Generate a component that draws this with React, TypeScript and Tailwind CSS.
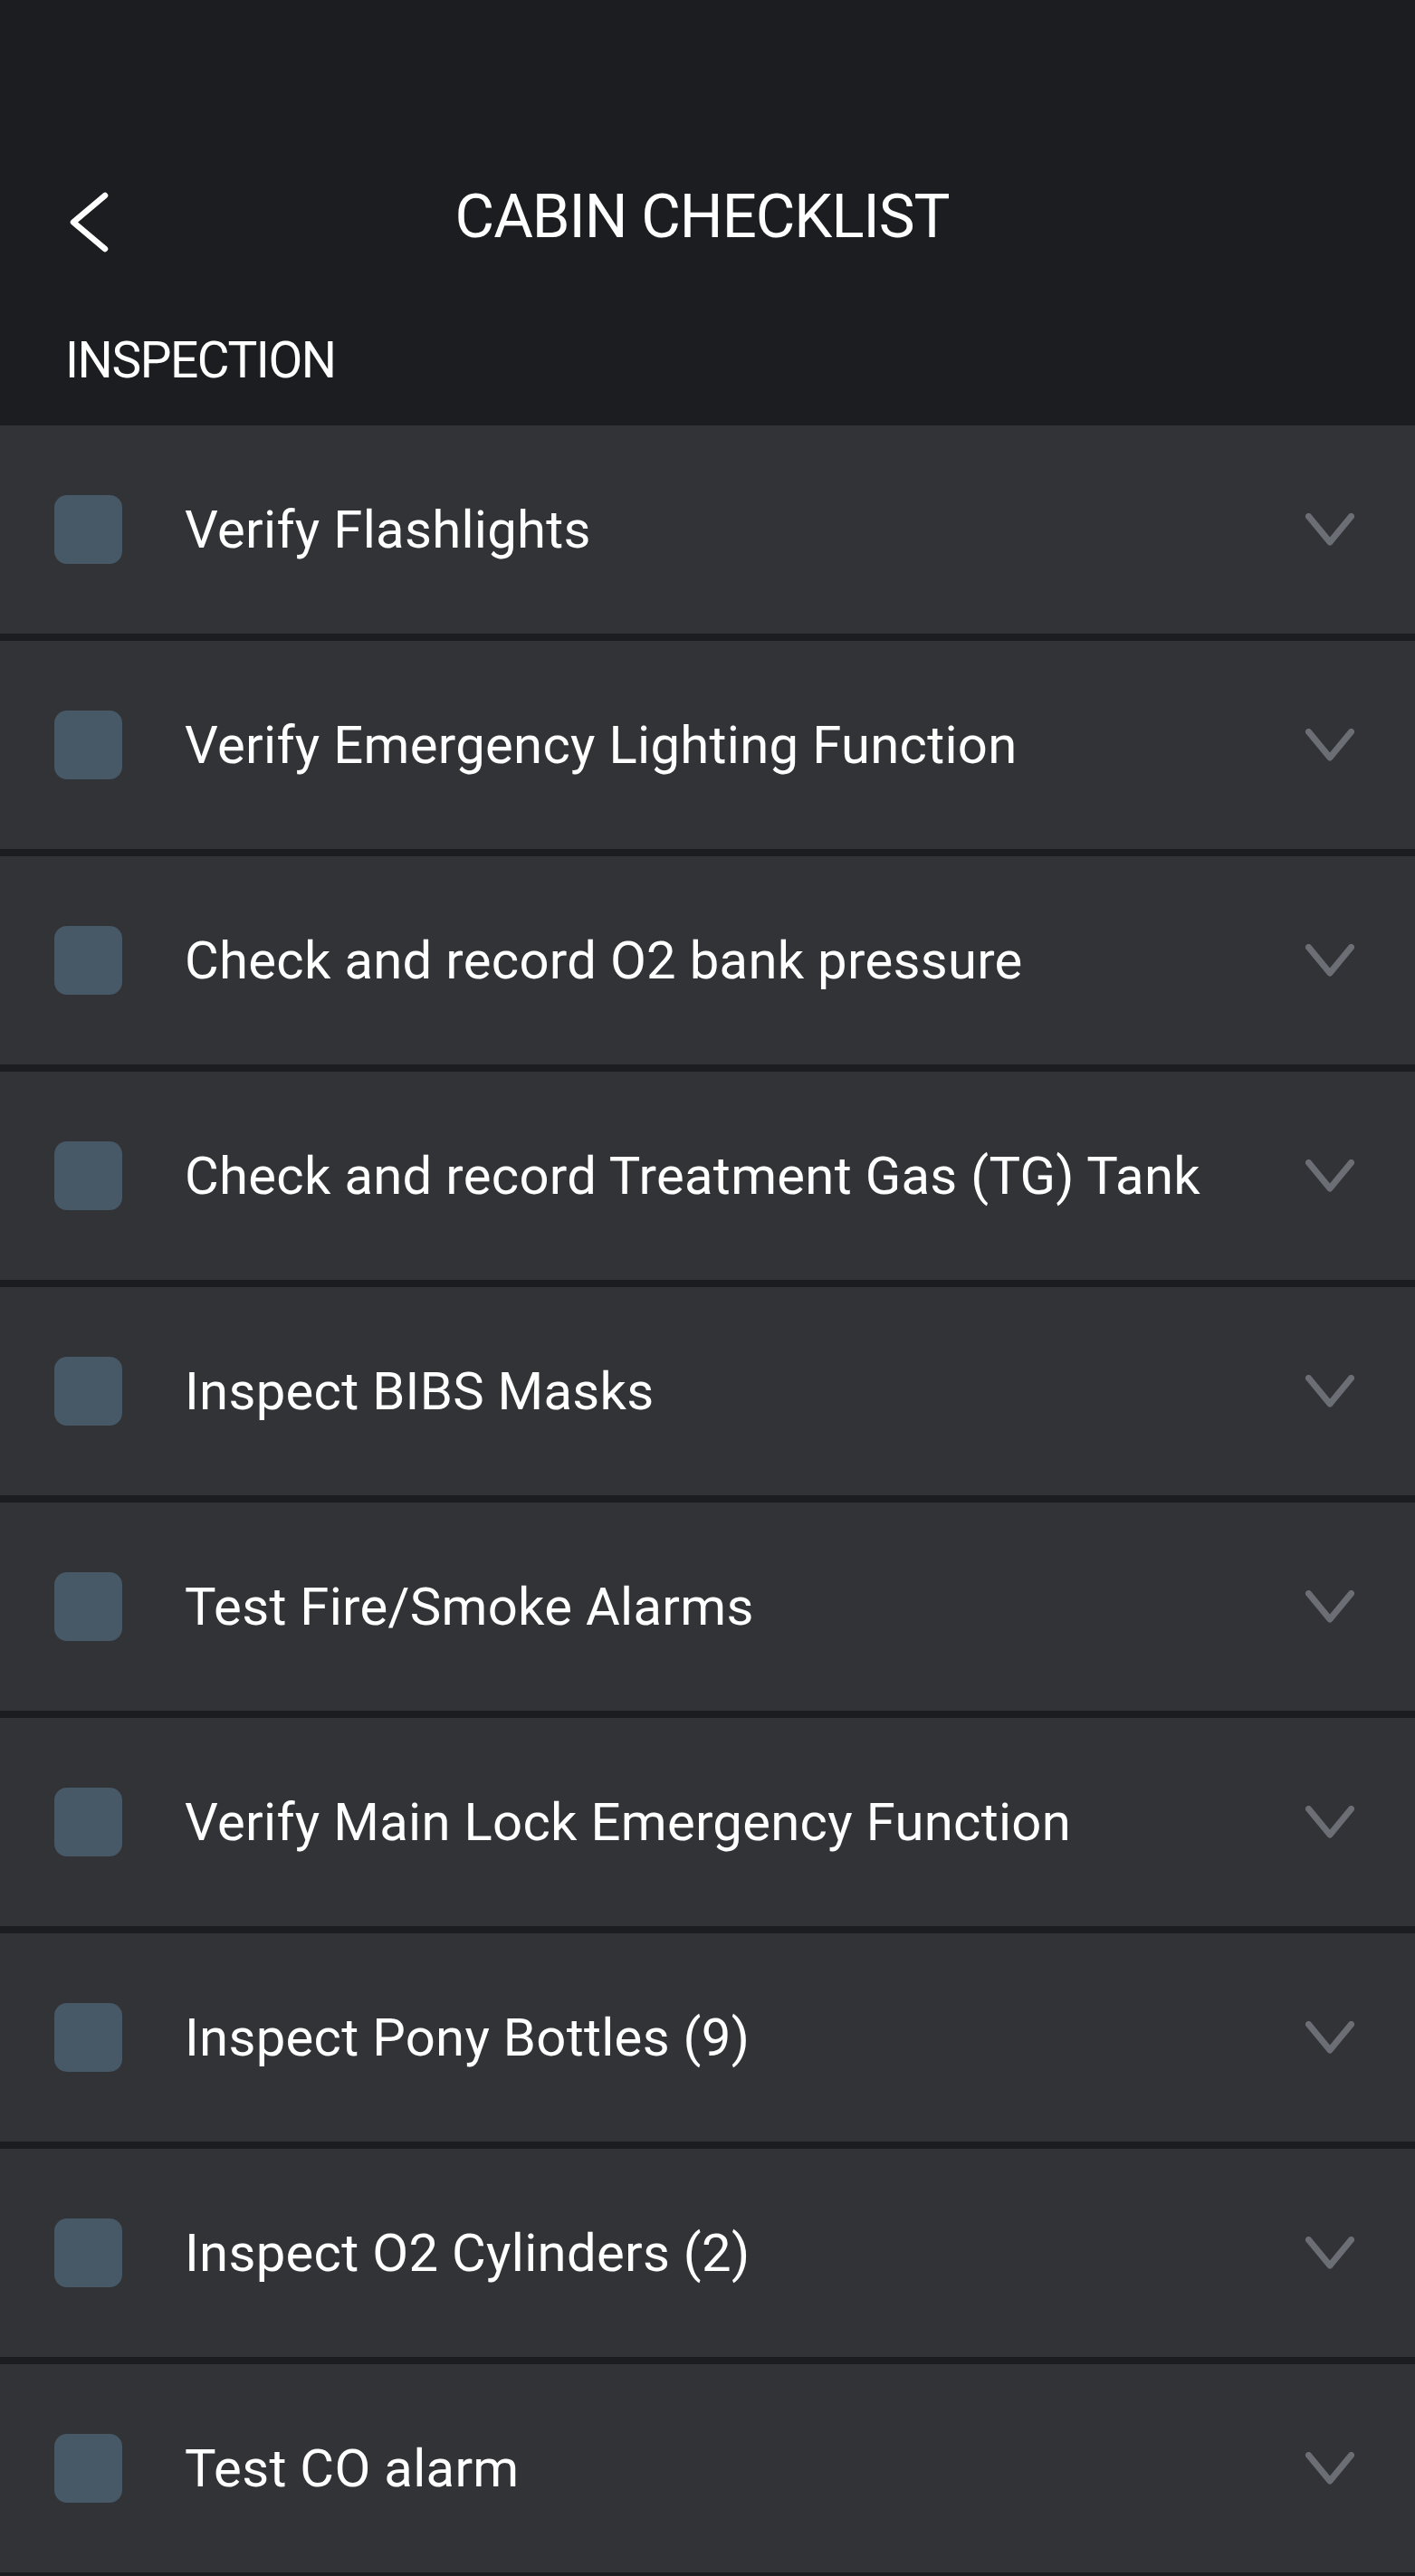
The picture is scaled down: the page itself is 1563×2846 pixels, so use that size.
import React from "react";

const ITEMS = [
  "Verify Flashlights",
  "Verify Emergency Lighting Function",
  "Check and record O2 bank pressure",
  "Check and record Treatment Gas (TG) Tank",
  "Inspect BIBS Masks",
  "Test Fire/Smoke Alarms",
  "Verify Main Lock Emergency Function",
  "Inspect Pony Bottles (9)",
  "Inspect O2 Cylinders (2)",
  "Test CO alarm",
];

const FONT = "font-['Roboto','Liberation_Sans',sans-serif]";

function ChevronDown() {
  return (
    <svg width="54" height="36" viewBox="0 0 54 36" fill="none" aria-hidden>
      <polyline
        points="3.5,3.5 27,32 50.5,3.5"
        stroke="#6b6e74"
        strokeWidth="7"
        strokeLinecap="round"
        strokeLinejoin="round"
      />
    </svg>
  );
}

function BackIcon() {
  return (
    <svg width="44" height="67" viewBox="0 0 44 67" fill="none" aria-hidden>
      <polyline
        points="40,4 5,33.5 40,63"
        stroke="#ffffff"
        strokeWidth="6.5"
        strokeLinecap="round"
        strokeLinejoin="round"
      />
    </svg>
  );
}

function ChecklistRow({ label }: { label: string }) {
  return (
    <div className="flex h-[230px] items-center bg-[#323337] pl-[60px] pr-[67px]">
      <div className="h-[76px] w-[75px] shrink-0 rounded-[14px] bg-[#475866]" />
      <span className="ml-[69px] flex-1 text-[58px] leading-none tracking-[0.3px] text-white">
        {label}
      </span>
      <ChevronDown />
    </div>
  );
}

export default function App() {
  return (
    <div className={`min-h-screen w-full bg-[#1c1d20] ${FONT}`}>
      <header className="flex h-[470px] flex-col bg-[#1c1d20] pt-[199px]">
        <div className="relative flex h-[80px] items-center justify-center pr-[12px]">
          <button type="button" className="absolute left-[76px] top-[13px]" aria-label="Back">
            <BackIcon />
          </button>
          <h1 className="text-[67px] leading-none tracking-[-1px] text-white">CABIN CHECKLIST</h1>
        </div>
        <p className="mt-[92px] pl-[72px] text-[55px] leading-none tracking-[-1.4px] text-white">
          INSPECTION
        </p>
      </header>

      <div className="flex flex-col gap-[8px]">
        {ITEMS.map((item) => (
          <ChecklistRow key={item} label={item} />
        ))}
      </div>
    </div>
  );
}
